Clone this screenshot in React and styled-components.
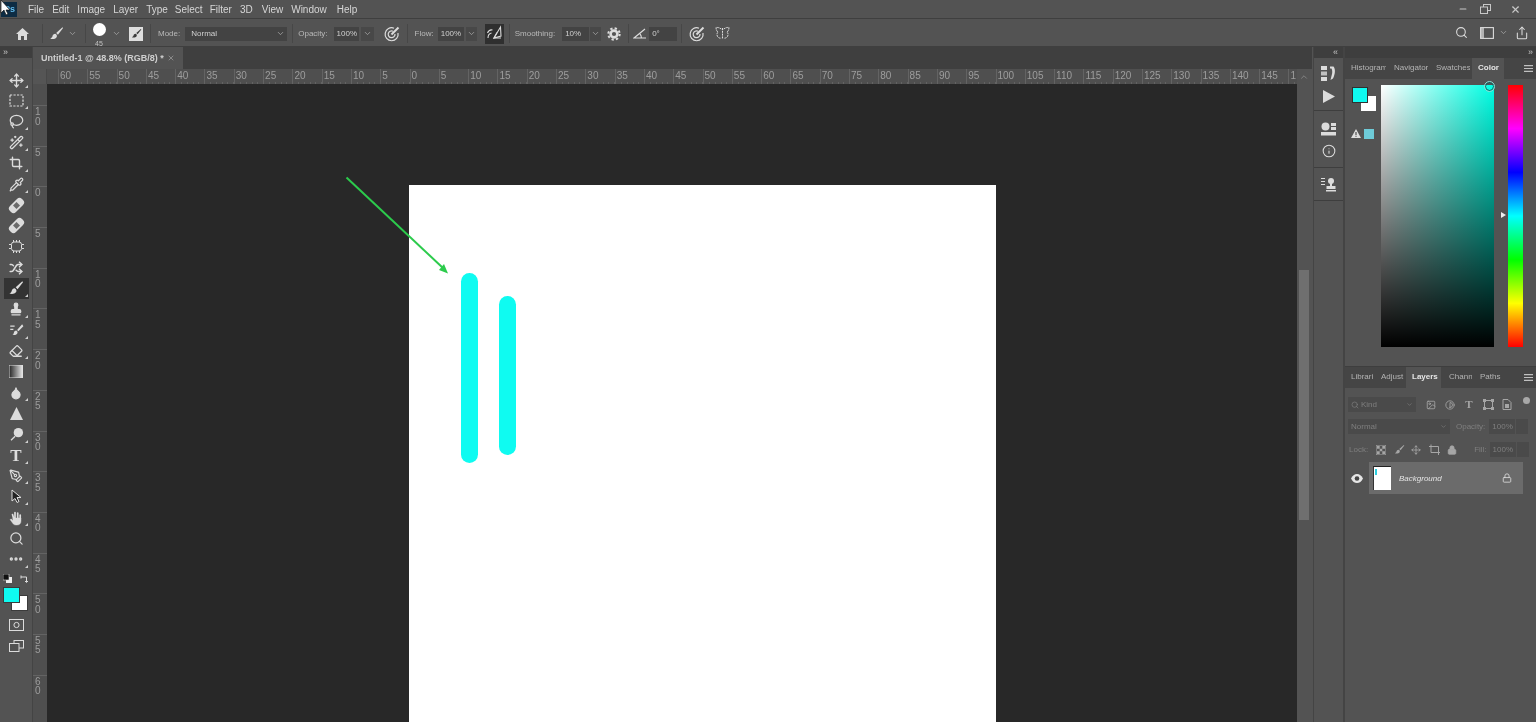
import React from "react";
import styled, { createGlobalStyle } from "styled-components";
import { ChevronDown, ChevronUp, Search, Share, Move, Lasso, WandSparkles, Crop, Pipette, Shuffle, Stamp, Eraser, Droplet, PenTool, Ellipsis, Info, Lock, Image as ImageIcon, Contrast, X, Minus } from "lucide-react";

const Global = createGlobalStyle`
  html, body { margin: 0; padding: 0; background: #535353; overflow: hidden; }
  * { box-sizing: border-box; }
  body { font-family: "Liberation Sans", Arial, sans-serif; }
`;

const App_ = styled.div`
  position: relative; width: 1536px; height: 722px; overflow: hidden;
  display: flex; flex-direction: column; background: #535353; color: #d4d4d4;
  filter: blur(0.4px);
`;
const MenuBar = styled.div`
  height: 19px; flex: none; display: flex; align-items: center; background: #535353;
  padding-left: 1px; border-bottom: 1px solid #3f3f3f;
`;
const Logo = styled.div`
  width: 16px; height: 15px; background: #0d2c44; color: #62bdf0; font-size: 9px; font-weight: 700;
  display: flex; align-items: center; justify-content: flex-end; padding-right: 2px; margin-right: 11px;
`;
const Menu = styled.span`
  font-size: 10px; color: #d6d6d6; margin-right: ${p => p.$mr}px; white-space: nowrap;
`;
const WinControls = styled.div`
  margin-left: auto; display: flex; align-items: center; height: 100%; padding-right: 6px; color: #c8c8c8;
`;
const WinBtn = styled.div`
  width: ${p => p.$w}px; display: flex; justify-content: center; align-items: center;
`;
const OptionsBar = styled.div`
  height: 28px; flex: none; display: flex; align-items: center; background: #535353;
  border-bottom: 1px solid #3f3f3f; padding: 2px 0 0 14px;
`;
const Slot = styled.div`
  flex: none; width: ${p => p.$w}px; margin-left: ${p => p.$ml || 0}px; height: 20px;
  display: flex; align-items: center; justify-content: center; color: #dcdcdc; position: relative;
  background: ${p => (p.$on ? "#2f2f2f" : "transparent")};
`;
const Sep = styled.div`
  flex: none; width: 1px; height: 19px; background: #474747; margin-left: ${p => p.$ml}px;
`;
const Label = styled.span`
  flex: none; font-size: 8px; color: #b9b9b9; margin-left: ${p => p.$ml}px; white-space: nowrap;
`;
const Field = styled.div`
  flex: none; width: ${p => p.$w}px; height: 14px; margin-left: ${p => p.$ml || 0}px; background: #434343;
  color: #d0d0d0; font-size: 8px; line-height: 14px; padding-left: ${p => p.$pl ?? 3}px;
  display: flex; align-items: center; justify-content: space-between; padding-right: 2px;
`;
const ChevBox = styled(Field)`
  padding: 0; justify-content: center; background: #484848; color: #aaa;
`;
const BrushDot = styled.div`
  width: 13px; height: 13px; border-radius: 50%; background: #fff; margin-top: -8px;
`;
const BrushSize = styled.span`
  position: absolute; left: 0; right: 0; bottom: -3px; text-align: center; font-size: 7px; color: #c0c0c0;
`;
const BrushPanelIcon = styled.div`
  width: 14px; height: 14px; background: #dedede; color: #3c3c3c; display: flex; align-items: center; justify-content: center;
`;
const RightTools = styled.div`
  margin-left: auto; display: flex; align-items: center; padding: 0 6px 2px 0;
`;

const Workspace = styled.div`
  flex: 1; min-height: 0; display: flex;
`;
const Toolbar = styled.div`
  flex: none; width: 33px; background: #535353; border-right: 1px solid #444; display: flex; flex-direction: column;
`;
const StripTop = styled.div`
  height: 11px; flex: none; background: #3e3e3e; color: #c4c4c4; font-size: 9px; line-height: 10px;
  padding: 0 ${p => p.$pad ?? 3}px; text-align: ${p => p.$align || "left"}; letter-spacing: -1px;
`;
const Tools = styled.div`
  padding-top: 11.6px; display: flex; flex-direction: column; align-items: center;
`;
const Tool = styled.div`
  position: relative; width: 25px; height: 20.85px; display: flex; align-items: center; justify-content: center;
  color: #dcdcdc; background: ${p => (p.$on ? "#333" : "transparent")};
  ${p => p.$tri && `&::after{content:"";position:absolute;right:1px;bottom:2px;border-left:3px solid transparent;border-bottom:3px solid #cfcfcf;}`}
`;
const TypeGlyph = styled.span`
  font-family: "Liberation Serif", serif; font-size: ${p => p.$size || 17}px; line-height: 1; font-weight: 700; color: ${p => p.$c || "#ddd"};
`;
const MiniColors = styled.div`
  width: 33px; height: 14px; margin-top: 2px; padding: 0 4px 0 3px; display: flex; align-items: center; justify-content: space-between; color: #ddd;
`;
const ColorChips = styled.div`
  position: relative; width: 33px; height: 24px; margin-top: 2px; flex: none;
`;
const Chip = styled.div`
  position: absolute; left: ${p => p.$l}px; top: ${p => p.$t}px; width: 15px; height: 14px; background: ${p => p.$c};
  outline: 1px solid #3b3b3b;
`;
const ModeTool = styled(Tool)`
  margin-top: ${p => p.$mt || 0}px; height: 21px;
`;

const DocArea = styled.div`
  width: 1279px; flex: none; display: flex; flex-direction: column; min-width: 0;
`;
const TabBar = styled.div`
  height: 22px; flex: none; background: #3f3f3f; display: flex;
`;
const DocTab = styled.div`
  width: 150px; background: #535353; display: flex; align-items: center; justify-content: space-between;
  padding: 0 8px; font-size: 9px; font-weight: 700; color: #cfcfcf; white-space: nowrap;
`;
const TabClose = styled.span`
  color: #a5a5a5; display: flex;
`;
const DocBody = styled.div`
  flex: 1; min-height: 0; display: flex;
`;
const ViewCol = styled.div`
  flex: 1; min-width: 0; display: flex; flex-direction: column;
`;
const RulerRow = styled.div`
  height: 15px; flex: none; display: flex; background: #4f4f4f;
`;
const RulerCorner = styled.div`
  width: 14px; flex: none; background: #555; border-right: 1px solid #484848;
`;
const HRuler = styled.div`
  flex: 1; min-width: 0; display: flex; overflow: hidden; padding-left: 11px;
`;
const HSeg = styled.div`
  flex: 0 0 29.3px; height: 15px; border-left: 1px solid #636363; padding-left: 1px;
  font-size: 10px; line-height: 14px; color: #9d9d9d; white-space: nowrap;
  background: repeating-linear-gradient(to right, transparent 0, transparent 4.86px, #636363 4.86px, #636363 5.86px) left bottom / 100% 2px no-repeat;
`;
const ViewRow = styled.div`
  flex: 1; min-height: 0; display: flex;
`;
const VRuler = styled.div`
  width: 14px; flex: none; background: #4f4f4f; padding-top: 21px; overflow: hidden;
`;
const VSeg = styled.div`
  height: 40.7px; border-top: 1px solid #636363; font-size: 10px; line-height: 9.5px; color: #9d9d9d;
  padding: 1px 0 0 2px; display: flex; flex-direction: column;
`;
const Canvas = styled.div`
  position: relative; flex: 1; min-width: 0; background: #282828; overflow: hidden;
`;
const Paper = styled.div`
  position: absolute; left: 362px; top: 101px; width: 587px; bottom: 0; background: #fff;
`;
const Stroke = styled.div`
  position: absolute; left: ${p => p.$l}px; top: ${p => p.$t}px; width: 17px; height: ${p => p.$h}px;
  background: #0ffbf1; border-radius: 8.5px;
`;
const Annotation = styled.svg`
  position: absolute; left: 0; top: 0; width: 100%; height: 100%; pointer-events: none;
`;
const ScrollBar = styled.div`
  width: 15px; flex: none; background: #535353; display: flex; flex-direction: column; align-items: center; color: #888; padding-right: 1px;
`;
const ScrollHead = styled.div`
  height: 15px; display: flex; align-items: center; justify-content: center; color: #8a8a8a;
`;
const ScrollThumb = styled.div`
  width: 10px; height: 250px; margin-top: 186px; background: #6f6f6f;
`;

const DockCol = styled.div`
  width: 32px; flex: none; display: flex; flex-direction: column; background: #535353; border-left: 1px solid #444; margin-left: 1px; border-right: 2px solid #444;
`;
const DockGroup = styled.div`
  height: ${p => p.$h}px; flex: none; display: flex; flex-direction: column; align-items: center; justify-content: space-evenly;
  padding-top: ${p => p.$pt || 0}px; border-bottom: 1px solid #3e3e3e; color: #dcdcdc;
`;
const PanelCol = styled.div`
  flex: 1; min-width: 0; display: flex; flex-direction: column; background: #535353;
`;
const PanelTabs = styled.div`
  height: 21px; flex: none; display: flex; background: #454545; align-items: stretch; position: relative;
`;
const PanelTab = styled.div`
  flex: none; width: ${p => p.$w}px; padding: 0 2px 0 ${p => p.$pl ?? 6}px; font-size: 8px; line-height: 20px;
  overflow: hidden; white-space: nowrap; color: ${p => (p.$on ? "#e6e6e6" : "#b4b4b4")};
  font-weight: ${p => (p.$on ? 700 : 400)}; background: ${p => (p.$on ? "#535353" : "transparent")};
`;
const TabLabel = styled.div`
  overflow: hidden;
`;
const PanelMenu = styled.div`
  margin-left: auto; width: 17px; padding-left: 5px; display: flex; align-items: center; color: #c0c0c0;
`;
const ColorPanel = styled.div`
  height: 288px; flex: none; position: relative; border-bottom: 1px solid #3e3e3e;
`;
const SwatchBox = styled.div`
  position: absolute; left: ${p => p.$l}px; top: ${p => p.$t}px; width: ${p => p.$s}px; height: ${p => p.$s}px; background: ${p => p.$c};
  outline: ${p => (p.$o ? "1px solid #303030" : "none")};
`;
const Warn = styled.svg`
  position: absolute; left: 6px; top: 50px;
`;
const Picker = styled.div`
  position: absolute; left: 36px; top: 6px; width: 113px; height: 262px;
  background: linear-gradient(to top, #000, rgba(0,0,0,0)), linear-gradient(to right, #fff, #00ffe4);
`;
const PickerDot = styled.div`
  position: absolute; right: 0; top: -3px; width: 9px; height: 9px; border-radius: 50%; border: 1px solid #0a5f5b; outline: 1px solid #8fdcd6;
`;
const HueBar = styled.div`
  position: absolute; left: 163px; top: 6px; width: 15px; height: 262px;
  background: linear-gradient(to bottom, #f00, #f0f, #00f, #0ff, #0f0, #ff0, #f00);
`;
const HueMark = styled.div`
  position: absolute; left: 156px; top: 133px; border-left: 5px solid #eee; border-top: 3px solid transparent; border-bottom: 3px solid transparent;
`;
const LayersPanel = styled.div`
  flex: 1; min-height: 0; display: flex; flex-direction: column;
`;
const LayerCtl = styled.div`
  display: flex; align-items: center; height: ${p => p.$h}px; padding-left: 3px; margin-top: ${p => p.$mt || 0}px; color: #8f8f8f;
`;
const DimField = styled.div`
  flex: none; width: ${p => p.$w}px; height: 15px; margin-left: ${p => p.$ml || 0}px; background: #4a4a4a; color: #7f7f7f;
  font-size: 8px; display: flex; align-items: center; justify-content: space-between; padding: 0 3px;
`;
const KindLabel = styled.span`
  display: flex; align-items: center; gap: 2px;
`;
const DimLabel = styled.span`
  flex: none; margin-left: ${p => p.$ml || 0}px; font-size: 8px; color: #7f7f7f; white-space: nowrap;
`;
const IconSlot = styled.div`
  flex: none; width: ${p => p.$w}px; margin-left: ${p => p.$ml || 0}px; display: flex; align-items: center; justify-content: center; color: ${p => p.$c || "#a6a6a6"};
`;
const FilterDot = styled.div`
  width: 7px; height: 7px; border-radius: 50%; background: #a8a8a8; margin: -8px 0 0 10px;
`;
const LayerRow = styled.div`
  display: flex; align-items: center; height: 32px; margin-top: 5px;
`;
const EyeSlot = styled.div`
  width: 24px; flex: none; display: flex; justify-content: center; color: #e6e6e6;
`;
const LayerCard = styled.div`
  width: 154px; height: 32px; background: #6b6b6b; display: flex; align-items: center; padding-left: 4px;
`;
const LayerThumb = styled.div`
  width: 18px; height: 24px; background: #fff; border-top: 1px solid #222; border-left: 1px solid #333; position: relative; flex: none;
`;
const ThumbMark = styled.div`
  position: absolute; left: 1px; top: 2px; width: 2px; height: 6px; background: #2ccfe0;
`;
const LayerName = styled.span`
  margin-left: 8px; font-size: 8px; font-style: italic; color: #e4e4e4; flex: none; width: 102px;
`;
const CursorMark = styled.svg`
  position: absolute; left: 0; top: 0;
`;

const Svg = ({ s = 16, vb = "0 0 24 24", children }) => (
  <svg width={s} height={s} viewBox={vb} fill="currentColor" stroke="none">{children}</svg>
);
const Brush = ({ s = 16 }) => (
  <Svg s={s}>
    <path d="M21.5 2 L11.5 11 l2.8 2.8 L22.5 3.2 Z" />
    <path d="M10.2 12.3c-2.6 0-4.2 1.6-4.7 4.2-.3 1.5-1.5 3-3.5 3.5 3 1.6 7.8 1.1 9.8-1.5 1.2-1.6 1.1-3.3 0-4.8z" />
  </Svg>
);
const Marquee = () => (
  <svg width="15" height="13" viewBox="0 0 15 13" fill="none" stroke="currentColor" strokeWidth="1.2" strokeDasharray="2.2 1.3"><rect x="1" y="1" width="13" height="11" /></svg>
);
const Plaster = () => (
  <svg width="17" height="17" viewBox="0 0 24 24"><g transform="rotate(-45 12 12)"><rect x="0" y="6" width="24" height="12" rx="5" fill="currentColor" /><rect x="8.5" y="8.5" width="7" height="7" fill="#6b6b6b" /></g></svg>
);
const Chipish = () => (
  <svg width="15" height="13" viewBox="0 0 15 13" fill="currentColor"><rect x="2.5" y="2" width="10" height="9" rx="2.5" stroke="currentColor" strokeWidth="1" fill="none" /><path d="M4 0h1v2H4zM7 0h1v2H7zM10 0h1v2h-1zM4 11h1v2H4zM7 11h1v2H7zM10 11h1v2h-1zM0 4h2v1H0zM0 8h2v1H0zM13 4h2v1h-2zM13 8h2v1h-2z" /></svg>
);
const HistoryBrush = () => (
  <Svg s={15}>
    <path d="M21 2 13 11l2 2 8-8zM11.5 12c-2 .2-3.3 1.5-3.7 3.4-.3 1.4-1.3 2.6-2.8 3.1 2.6 1.4 6.4.9 8-1.3 1-1.3.9-2.8 0-4z" />
    <path d="M2 4h7v2H2zM2 9h5v2H2z" />
  </Svg>
);
const GradientBox = () => (
  <svg width="14" height="13" viewBox="0 0 14 13"><defs><linearGradient id="tg"><stop offset="0" stopColor="#222" /><stop offset="1" stopColor="#eee" /></linearGradient></defs><rect width="14" height="13" fill="url(#tg)" stroke="#ddd" /></svg>
);
const Triangle = () => <svg width="13" height="13" viewBox="0 0 13 13" fill="currentColor"><path d="M6.500 0 13 13H0z" /></svg>;
const Dodge = () => (
  <Svg s={15}><circle cx="15" cy="9" r="7.5" /><path d="M9 14 2.5 20.5 4 22l6.5-6.5z" /></Svg>
);
const Cursorish = () => (
  <svg width="13" height="15" viewBox="0 0 13 15"><path d="M2 1v11l3-2.5 2 4 2-1-2-4h4z" fill="#222" stroke="#ddd" /></svg>
);
const HandIcon = () => (
  <svg width="16" height="16" viewBox="0 0 16 16" fill="currentColor" stroke="currentColor" strokeLinecap="round">
    <path d="M4.500 4.500 5.500 8M7 2.500V8M9.700 3V8M12.200 5v4" strokeWidth="1.700" fill="none" />
    <path d="M5 8h8v3c0 2.500-1.500 4-4 4H8c-2 0-3-1-4.500-3.500L2 9.500l1.500-.5L5 10.500z" strokeWidth=".4" />
  </svg>
);
const DefaultColors = () => (
  <svg width="9" height="9" viewBox="0 0 9 9"><rect x="3" y="3" width="6" height="6" fill="#eee" /><rect width="6" height="6" fill="#111" stroke="#ddd" strokeWidth=".6" /></svg>
);
const Swap = () => (
  <svg width="9" height="9" viewBox="0 0 9 9" fill="none" stroke="currentColor" strokeWidth="1"><path d="M1 3h5.500v5M1 1.500v3M5 7l1.500 1.500L8 7" /></svg>
);
const QuickMask = () => (
  <svg width="15" height="12" viewBox="0 0 15 12" fill="none" stroke="currentColor"><rect x=".5" y=".5" width="14" height="11" /><circle cx="7.500" cy="6" r="2.600" /></svg>
);
const ScreenMode = () => (
  <svg width="15" height="12" viewBox="0 0 15 12" fill="none" stroke="currentColor"><rect x="5" y=".5" width="9.500" height="7.500" /><rect x=".5" y="3.500" width="9.500" height="8" fill="#535353" /></svg>
);
const Target = () => (
  <svg width="16" height="16" viewBox="0 0 16 16" fill="none" stroke="currentColor" strokeWidth="1.200"><path d="M10 2.200A6.500 6.500 0 1 0 14 7" /><path d="M9 5.200A3.400 3.400 0 1 0 11 8" /><path d="M7.500 8.500 14.500 1.500" strokeWidth="2" /></svg>
);
const Airbrush = () => (
  <svg width="17" height="17" viewBox="0 0 17 17" fill="none" stroke="currentColor" strokeWidth="1.100"><path d="M1.500 8c1-2.500 3-3.500 5-3M2 13c0-3 1.500-4.500 3.500-5" /><path d="M8 13 14.500 2 15 11z" /><path d="M11 7.500 8 13h7" /></svg>
);
const Gear = () => (
  <svg width="14" height="14" viewBox="0 0 14 14" fill="none" stroke="currentColor"><circle cx="7" cy="7" r="3.400" strokeWidth="2.600" /><circle cx="7" cy="7" r="5.700" strokeWidth="2" strokeDasharray="2.300 2.170" /></svg>
);
const Angle = () => (
  <svg width="14" height="11" viewBox="0 0 14 11" fill="none" stroke="currentColor" strokeWidth="1.100"><path d="M12 1 1 10h12M7 6c1 1 1.400 2.400 1.400 4" /></svg>
);
const Butterfly = () => (
  <svg width="15" height="15" viewBox="0 0 15 15" fill="none" stroke="currentColor" strokeWidth="1"><path d="M7.500 2v11M6.300 3C4.500 1.600 2 1.200 1 1.500c0 2 .7 3.700 2 4.700-1 .7-1.500 2.500-.5 4.300 1 1.500 3 2 3.800 1.500M8.700 3c1.800-1.400 4.300-1.800 5.300-1.500 0 2-.7 3.700-2 4.700 1 .7 1.500 2.500.5 4.300-1 1.500-3 2-3.800 1.500" strokeDasharray="2 .8" /></svg>
);
const ViewIcon = () => (
  <svg width="14" height="12" viewBox="0 0 14 12" fill="none" stroke="currentColor" strokeWidth="1.100"><rect x=".6" y=".6" width="12.800" height="10.800" /><rect x="1" y="1" width="3" height="10" fill="currentColor" stroke="none" opacity=".7" /></svg>
);
const Restore = () => (
  <svg width="11" height="10" viewBox="0 0 11 10" fill="none" stroke="currentColor"><rect x="3.500" y=".5" width="7" height="6" /><rect x=".5" y="3" width="7" height="6.500" fill="#535353" /></svg>
);
const HistoryDock = () => (
  <svg width="15" height="17" viewBox="0 0 15 17" fill="currentColor"><rect x="0" y="1" width="6" height="4" /><rect x="0" y="6.500" width="6" height="4" opacity=".8" /><rect x="0" y="12" width="6" height="4" /><path d="M9 1.500h3.500c2 2.500 2 7-.5 12l-2.500 1.500 1-4c1-3 1-5.500 0-7.500H9z" /></svg>
);
const PlayTri = () => <svg width="12" height="13" viewBox="0 0 12 13" fill="currentColor"><path d="M0 0 12 6.500 0 13z" /></svg>;
const DockGlobe = () => (
  <svg width="16" height="14" viewBox="0 0 16 14" fill="currentColor"><circle cx="4.500" cy="4.500" r="4" /><rect x="10" y="1" width="5" height="3" /><rect x="10" y="5" width="5" height="3" /><rect x="0" y="10" width="15" height="3.500" /></svg>
);
const DockStamp = () => (
  <svg width="16" height="15" viewBox="0 0 16 15" fill="currentColor"><path d="M0 1h4v1H0zM0 4h4v1H0zM0 7h4v1H0z" /><circle cx="10" cy="4" r="3" /><path d="M9 6h2v3h3.500v3H5.500V9H9zM5 13h10v1.500H5z" /></svg>
);
const HamburgerIcon = () => (
  <svg width="9" height="7" viewBox="0 0 9 7" fill="currentColor"><path d="M0 0h9v1.200H0zM0 2.900h9v1.200H0zM0 5.800h9V7H0z" /></svg>
);
const Checker = () => (
  <svg width="10" height="10" viewBox="0 0 10 10" fill="currentColor"><path d="M0 0h10v10H0z" fill="none" stroke="currentColor" /><path d="M1 1h2.700v2.700H1zM6.300 1H9v2.700H6.300zM3.700 3.700h2.600v2.600H3.700zM1 6.300h2.700V9H1zM6.300 6.300H9V9H6.300z" /></svg>
);
const Artboard = () => (
  <svg width="11" height="11" viewBox="0 0 11 11" fill="none" stroke="currentColor"><path d="M0 2.500h9.500V11M2 .5V8.500H11" /></svg>
);
const FrameIcon = () => (
  <svg width="11" height="11" viewBox="0 0 11 11" fill="none" stroke="currentColor"><rect x="1.500" y="1.500" width="8" height="8" /><path d="M0 0h3v3H0zM8 0h3v3H8zM0 8h3v3H0zM8 8h3v3H8z" fill="currentColor" stroke="none" /></svg>
);
const DocIcon = () => (
  <svg width="10" height="11" viewBox="0 0 10 11" fill="currentColor"><path d="M1 .5h5l3 3v7H1z" fill="none" stroke="currentColor" /><path d="M3 5h4v4H3z" /></svg>
);
const EyeIcon = () => (
  <svg width="12" height="9" viewBox="0 0 12 9"><path d="M0 4.500C1.500 1.500 3.500 0 6 0s4.500 1.500 6 4.500C10.500 7.500 8.500 9 6 9S1.500 7.500 0 4.500z" fill="currentColor" /><circle cx="6" cy="4.500" r="2.300" fill="#444" /></svg>
);

const menus = [["File", 8], ["Edit", 8], ["Image", 8], ["Layer", 8], ["Type", 7], ["Select", 7], ["Filter", 8], ["3D", 9], ["View", 8], ["Window", 10], ["Help", 0]];
const hLabels = [60, 55, 50, 45, 40, 35, 30, 25, 20, 15, 10, 5, 0, 5, 10, 15, 20, 25, 30, 35, 40, 45, 50, 55, 60, 65, 70, 75, 80, 85, 90, 95, 100, 105, 110, 115, 120, 125, 130, 135, 140, 145, 1];
const vLabels = [10, 5, 0, 5, 10, 15, 20, 25, 30, 35, 40, 45, 50, 55, 60];
const tools = [
  [<Move size={15} strokeWidth={2.2} />, 1], [<Marquee />, 1], [<Lasso size={15} strokeWidth={2} />, 1], [<WandSparkles size={15} strokeWidth={2} />, 1],
  [<Crop size={14} strokeWidth={2.4} />, 1], [<Pipette size={15} strokeWidth={2} />, 1], [<Plaster />, 0],
  [<Plaster />, 0], [<Chipish />, 0], [<Shuffle size={14} strokeWidth={2.6} />, 0],
  [<Brush />, 1, true], [<Stamp size={14} strokeWidth={2.2} fill="currentColor" />, 1], [<HistoryBrush />, 1], [<Eraser size={14} strokeWidth={2.2} />, 1], [<GradientBox />, 0],
  [<Droplet size={14} fill="currentColor" />, 1], [<Triangle />, 0], [<Dodge />, 1], [<TypeGlyph>T</TypeGlyph>, 1], [<PenTool size={14} strokeWidth={2} />, 1],
  [<Cursorish />, 1], [<HandIcon />, 1], [<Search size={15} strokeWidth={2} />, 0], [<Ellipsis size={16} strokeWidth={3} />, 1],
];

export default function App() {
  return (
    <App_>
      <Global />
      <MenuBar>
        <Logo>Ps</Logo>
        {menus.map(([m, mr]) => <Menu key={m} $mr={mr}>{m}</Menu>)}
        <WinControls>
          <WinBtn $w={14}><Minus size={10} strokeWidth={2.5} /></WinBtn>
          <WinBtn $w={30}><Restore /></WinBtn>
          <WinBtn $w={30}><X size={11} strokeWidth={2.5} /></WinBtn>
        </WinControls>
      </MenuBar>
      <OptionsBar>
        <Slot $w={16}><svg width="13" height="12" viewBox="0 0 13 12" fill="currentColor"><path d="M6.500 0 13 6h-2v6H8V8H5v4H2V6H0z" /></svg></Slot>
        <Sep $ml={12} />
        <Slot $w={16} $ml={5}><Brush s={15} /></Slot>
        <Slot $w={10} $ml={3}><ChevronDown size={9} color="#aaa" /></Slot>
        <Sep $ml={8} />
        <Slot $w={14} $ml={6}><BrushDot /><BrushSize>45</BrushSize></Slot>
        <Slot $w={10} $ml={5}><ChevronDown size={9} color="#aaa" /></Slot>
        <Slot $w={14} $ml={8}><BrushPanelIcon><Brush s={11} /></BrushPanelIcon></Slot>
        <Sep $ml={7} />
        <Label $ml={7}>Mode:</Label>
        <Field $w={102} $ml={5} $pl={6}>Normal<ChevronDown size={9} color="#aaa" /></Field>
        <Sep $ml={5} />
        <Label $ml={5}>Opacity:</Label>
        <Field $w={25} $ml={6}>100%</Field>
        <ChevBox $w={13} $ml={2}><ChevronDown size={9} /></ChevBox>
        <Slot $w={16} $ml={10}><Target /></Slot>
        <Sep $ml={7} />
        <Label $ml={7}>Flow:</Label>
        <Field $w={26} $ml={4}>100%</Field>
        <ChevBox $w={11} $ml={2}><ChevronDown size={9} /></ChevBox>
        <Slot $w={19} $ml={8} $on><Airbrush /></Slot>
        <Sep $ml={5} />
        <Label $ml={5}>Smoothing:</Label>
        <Field $w={27} $ml={7}>10%</Field>
        <ChevBox $w={11} $ml={1}><ChevronDown size={9} /></ChevBox>
        <Slot $w={16} $ml={5}><Gear /></Slot>
        <Sep $ml={6} />
        <Slot $w={14} $ml={4}><Angle /></Slot>
        <Field $w={28} $ml={2}>0°</Field>
        <Sep $ml={4} />
        <Slot $w={16} $ml={7}><Target /></Slot>
        <Slot $w={16} $ml={9}><Butterfly /></Slot>
        <RightTools>
          <Slot $w={16}><Search size={13} strokeWidth={2} /></Slot>
          <Slot $w={16} $ml={10}><ViewIcon /></Slot>
          <Slot $w={10} $ml={3}><ChevronDown size={9} color="#aaa" /></Slot>
          <Slot $w={16} $ml={6}><Share size={14} strokeWidth={1.8} /></Slot>
        </RightTools>
      </OptionsBar>
      <Workspace>
        <Toolbar>
          <StripTop $pad={3}>››</StripTop>
          <Tools>
            {tools.map(([icon, tri, on], i) => <Tool key={i} $tri={tri} $on={on}>{icon}</Tool>)}
            <MiniColors><DefaultColors /><Swap /></MiniColors>
            <ColorChips>
              <Chip $l={12} $t={8} $c="#fff" />
              <Chip $l={4} $t={0} $c="#0ffbf1" />
            </ColorChips>
            <ModeTool $mt={3}><QuickMask /></ModeTool>
            <ModeTool><ScreenMode /></ModeTool>
          </Tools>
        </Toolbar>
        <DocArea>
          <TabBar>
            <DocTab>Untitled-1 @ 48.8% (RGB/8) *<TabClose><X size={8} /></TabClose></DocTab>
          </TabBar>
          <DocBody>
            <ViewCol>
              <RulerRow>
                <RulerCorner />
                <HRuler>{hLabels.map((n, i) => <HSeg key={i}>{n}</HSeg>)}</HRuler>
              </RulerRow>
              <ViewRow>
                <VRuler>
                  {vLabels.map((n, i) => <VSeg key={i}>{String(n).split("").map((d, j) => <span key={j}>{d}</span>)}</VSeg>)}
                </VRuler>
                <Canvas>
                  <Paper>
                    <Stroke $l={52} $t={88} $h={190} />
                    <Stroke $l={90} $t={111} $h={159} />
                  </Paper>
                  <Annotation>
                    <path d="M299.500 93.500 396 184" stroke="#2ccb4c" strokeWidth="2" fill="none" />
                    <path d="M401 189.500 392 186 397 180z" fill="#2ccb4c" />
                  </Annotation>
                </Canvas>
              </ViewRow>
            </ViewCol>
            <ScrollBar>
              <ScrollHead><ChevronUp size={10} /></ScrollHead>
              <ScrollThumb />
            </ScrollBar>
          </DocBody>
        </DocArea>
        <DockCol>
          <StripTop $align="right" $pad={6}>‹‹</StripTop>
          <DockGroup $h={53}><HistoryDock /><PlayTri /></DockGroup>
          <DockGroup $h={57} $pt={2}><DockGlobe /><Info size={14} strokeWidth={1.8} /></DockGroup>
          <DockGroup $h={33}><DockStamp /></DockGroup>
        </DockCol>
        <PanelCol>
          <StripTop $align="right" $pad={4}>››</StripTop>
          <PanelTabs>
            <PanelTab $w={43}><TabLabel>Histogram</TabLabel></PanelTab>
            <PanelTab $w={42}><TabLabel>Navigator</TabLabel></PanelTab>
            <PanelTab $w={42}><TabLabel>Swatches</TabLabel></PanelTab>
            <PanelTab $w={32} $on><TabLabel>Color</TabLabel></PanelTab>
            <PanelMenu><HamburgerIcon /></PanelMenu>
          </PanelTabs>
          <ColorPanel>
            <SwatchBox $l={16} $t={17} $s={15} $c="#fff" />
            <SwatchBox $l={8} $t={9} $s={14} $c="#0ffbf1" $o />
            <Warn width="10" height="9" viewBox="0 0 10 9"><path d="M5 0l5 9H0z" fill="#ddd" /><path d="M4.500 3h1v3h-1zM4.500 6.800h1v1h-1z" fill="#333" /></Warn>
            <SwatchBox $l={19} $t={50} $s={10} $c="#6ecbd8" />
            <Picker><PickerDot /></Picker>
            <HueMark />
            <HueBar />
          </ColorPanel>
          <LayersPanel>
            <PanelTabs>
              <PanelTab $w={30}><TabLabel>Librari</TabLabel></PanelTab>
              <PanelTab $w={31}><TabLabel>Adjust</TabLabel></PanelTab>
              <PanelTab $w={35} $on><TabLabel>Layers</TabLabel></PanelTab>
              <PanelTab $w={33} $pl={8}><TabLabel>Chann</TabLabel></PanelTab>
              <PanelTab $w={34}><TabLabel>Paths</TabLabel></PanelTab>
              <PanelMenu><HamburgerIcon /></PanelMenu>
            </PanelTabs>
            <LayerCtl $h={15} $mt={9}>
              <DimField $w={68}><KindLabel><Search size={8} />Kind</KindLabel><ChevronDown size={7} /></DimField>
              <IconSlot $w={12} $ml={9}><ImageIcon size={10} /></IconSlot>
              <IconSlot $w={12} $ml={7}><Contrast size={10} /></IconSlot>
              <IconSlot $w={12} $ml={7}><TypeGlyph $size={11} $c="#a6a6a6">T</TypeGlyph></IconSlot>
              <IconSlot $w={12} $ml={7}><FrameIcon /></IconSlot>
              <IconSlot $w={12} $ml={7}><DocIcon /></IconSlot>
              <FilterDot />
            </LayerCtl>
            <LayerCtl $h={15} $mt={7}>
              <DimField $w={102}>Normal<ChevronDown size={7} /></DimField>
              <DimLabel $ml={6}>Opacity:</DimLabel>
              <DimField $w={26} $ml={4}>100%</DimField>
              <DimField $w={12} $ml={1} />
            </LayerCtl>
            <LayerCtl $h={15} $mt={8}>
              <DimLabel $ml={1}>Lock:</DimLabel>
              <IconSlot $w={12} $ml={7}><Checker /></IconSlot>
              <IconSlot $w={12} $ml={6}><Brush s={11} /></IconSlot>
              <IconSlot $w={12} $ml={5}><Move size={10} /></IconSlot>
              <IconSlot $w={12} $ml={6}><Artboard /></IconSlot>
              <IconSlot $w={12} $ml={6}><Lock size={10} fill="currentColor" /></IconSlot>
              <DimLabel $ml={16}>Fill:</DimLabel>
              <DimField $w={26} $ml={3}>100%</DimField>
              <DimField $w={12} $ml={1} />
            </LayerCtl>
            <LayerRow>
              <EyeSlot><EyeIcon /></EyeSlot>
              <LayerCard>
                <LayerThumb><ThumbMark /></LayerThumb>
                <LayerName>Background</LayerName>
                <IconSlot $w={12} $c="#ddd"><Lock size={10} /></IconSlot>
              </LayerCard>
            </LayerRow>
          </LayersPanel>
        </PanelCol>
      </Workspace>
      <CursorMark width="11" height="16" viewBox="0 0 11 16"><path d="M1 0v13l3-3 2 5 2-1-2-4h4z" fill="#fff" stroke="#111" strokeWidth=".7" /></CursorMark>
    </App_>
  );
}
